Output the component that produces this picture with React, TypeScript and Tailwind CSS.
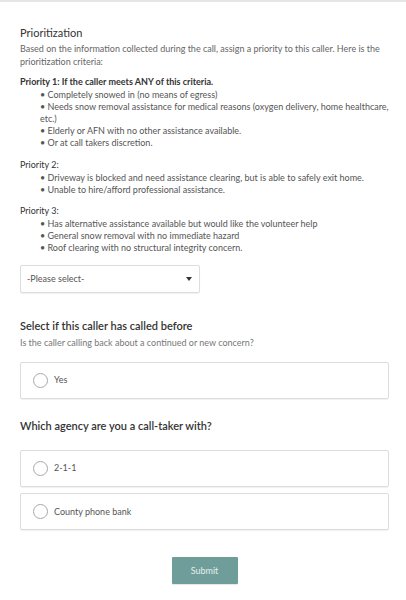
import React from "react";

const Bullet = ({ text }: { text: string }) => (
  <div className="pl-[20px] leading-[12px]">{`• ${text}`}</div>
);

const Radio = ({ label }: { label: string }) => (
  <div className="flex items-center h-[37px] border border-[#dcdcdc] rounded-[2px] shadow-[0_1px_1px_rgba(0,0,0,0.06)] pl-[12px]">
    <span className="w-[15px] h-[15px] rounded-full border-[1.5px] border-[#a8a8a8] bg-white"></span>
    <span className="ml-[6px] text-[9px] text-[#555]">{label}</span>
  </div>
);

export default function App() {
  return (
    <div
      className="w-[406px] h-[600px] bg-white text-[#4d4d4d] border-t-2 border-[#e6e6e6]"
      style={{ fontFamily: "Lato, 'Noto Sans', sans-serif" }}
    >
      <div className="pl-[20px] pr-[17px] pt-[23px]">
        <h2 className="text-[11px] leading-[16px] text-[#333]">Prioritization</h2>
        <p className="mt-[1px] text-[9px] leading-[13px] text-[#666]">
          Based on the information collected during the call, assign a priority to this caller. Here is the prioritization criteria:
        </p>
        <div className="text-[9px] text-[#555]">
          <div className="mt-[6px] leading-[15px] font-bold text-[#333]">Priority 1: If the caller meets ANY of this criteria.</div>
          <Bullet text="Completely snowed in (no means of egress)" />
          <Bullet text="Needs snow removal assistance for medical reasons (oxygen delivery, home healthcare, etc.)" />
          <Bullet text="Elderly or AFN with no other assistance available." />
          <Bullet text="Or at call takers discretion." />
          <div className="mt-[8.5px] leading-[14px] text-[#333]">Priority 2:</div>
          <Bullet text="Driveway is blocked and need assistance clearing, but is able to safely exit home." />
          <Bullet text="Unable to hire/afford professional assistance." />
          <div className="mt-[8px] leading-[14px] text-[#333]">Priority 3:</div>
          <Bullet text="Has alternative assistance available but would like the volunteer help" />
          <Bullet text="General snow removal with no immediate hazard" />
          <Bullet text="Roof clearing with no structural integrity concern." />
        </div>
        <div className="mt-[11.5px] w-[180px] h-[28px] border border-[#dcdcdc] rounded-[2px] shadow-[0_1px_1px_rgba(0,0,0,0.06)] flex items-center justify-between pl-[6px] pr-[7px]">
          <span className="text-[9px] text-[#555]">-Please select-</span>
          <svg width="6" height="4" viewBox="0 0 6 4"><path d="M0 0H6L3 4Z" fill="#333" /></svg>
        </div>

        <h2 className="mt-[25px] text-[11px] leading-[16px] text-[#333] font-semibold">Select if this caller has called before</h2>
        <p className="mt-[2.5px] text-[9px] leading-[12px] text-[#777]">Is the caller calling back about a continued or new concern?</p>
        <div className="mt-[13px]">
          <Radio label="Yes" />
        </div>

        <h2 className="mt-[19.5px] text-[11px] leading-[16px] text-[#333] font-semibold">Which agency are you a call-taker with?</h2>
        <div className="mt-[15.5px] flex flex-col gap-[6.5px]">
          <Radio label="2-1-1" />
          <Radio label="County phone bank" />
        </div>

        <div className="mt-[27px] flex justify-center">
          <button className="w-[66px] h-[27px] bg-[#6f9e9a] text-[#e4eeed] text-[9px] rounded-[1px] shadow-[0_1px_1px_rgba(0,0,0,0.1)]">Submit</button>
        </div>
      </div>
    </div>
  );
}
